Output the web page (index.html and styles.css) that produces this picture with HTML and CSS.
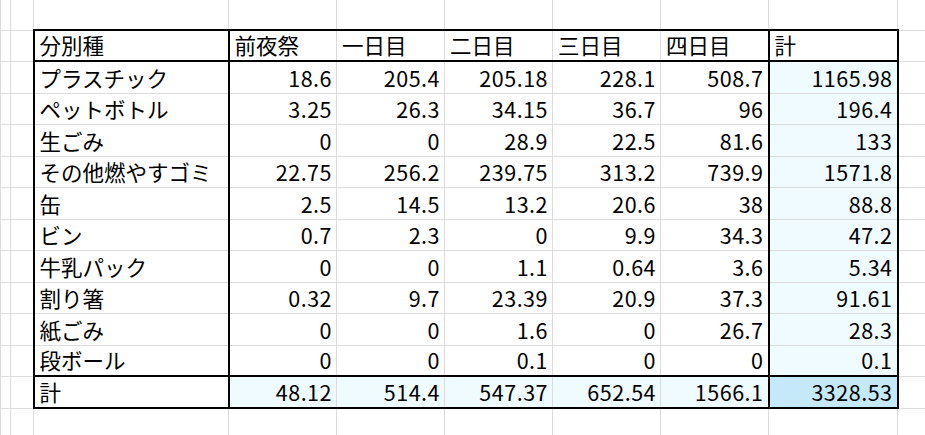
FILE: index.html
```html
<!DOCTYPE html>
<html lang="ja">
<head>
<meta charset="utf-8">
<link rel="stylesheet" href="styles.css">
</head>
<body>
<table class="sheet">
  <colgroup>
    <col class="c-a"><col class="c-b"><col class="c-lab"><col class="c-n"><col class="c-n"><col class="c-n"><col class="c-n"><col class="c-n"><col class="c-tot"><col class="c-z">
  </colgroup>
  <tr class="r-top"><td></td><td></td><td></td><td></td><td></td><td></td><td></td><td></td><td></td><td></td></tr>
  <tr class="r-odd head"><td></td><td></td><td class="lab tl">分別種</td><td class="txt tr">前夜祭</td><td class="txt">一日目</td><td class="txt">二日目</td><td class="txt">三日目</td><td class="txt">四日目</td><td class="txt tot">計</td><td></td></tr>
  <tr class="r-even"><td></td><td></td><td class="lab tl">プラスチック</td><td class="tr">18.6</td><td>205.4</td><td>205.18</td><td>228.1</td><td>508.7</td><td class="tot fill">1165.98</td><td></td></tr>
  <tr class="r-odd"><td></td><td></td><td class="lab tl">ペットボトル</td><td class="tr">3.25</td><td>26.3</td><td>34.15</td><td>36.7</td><td>96</td><td class="tot fill">196.4</td><td></td></tr>
  <tr class="r-even"><td></td><td></td><td class="lab tl">生ごみ</td><td class="tr">0</td><td>0</td><td>28.9</td><td>22.5</td><td>81.6</td><td class="tot fill">133</td><td></td></tr>
  <tr class="r-odd"><td></td><td></td><td class="lab tl">その他燃やすゴミ</td><td class="tr">22.75</td><td>256.2</td><td>239.75</td><td>313.2</td><td>739.9</td><td class="tot fill">1571.8</td><td></td></tr>
  <tr class="r-even"><td></td><td></td><td class="lab tl">缶</td><td class="tr">2.5</td><td>14.5</td><td>13.2</td><td>20.6</td><td>38</td><td class="tot fill">88.8</td><td></td></tr>
  <tr class="r-odd"><td></td><td></td><td class="lab tl">ビン</td><td class="tr">0.7</td><td>2.3</td><td>0</td><td>9.9</td><td>34.3</td><td class="tot fill">47.2</td><td></td></tr>
  <tr class="r-even"><td></td><td></td><td class="lab tl">牛乳パック</td><td class="tr">0</td><td>0</td><td>1.1</td><td>0.64</td><td>3.6</td><td class="tot fill">5.34</td><td></td></tr>
  <tr class="r-odd"><td></td><td></td><td class="lab tl">割り箸</td><td class="tr">0.32</td><td>9.7</td><td>23.39</td><td>20.9</td><td>37.3</td><td class="tot fill">91.61</td><td></td></tr>
  <tr class="r-even"><td></td><td></td><td class="lab tl">紙ごみ</td><td class="tr">0</td><td>0</td><td>1.6</td><td>0</td><td>26.7</td><td class="tot fill">28.3</td><td></td></tr>
  <tr class="r-odd"><td></td><td></td><td class="lab tl">段ボール</td><td class="tr">0</td><td>0</td><td>0.1</td><td>0</td><td>0</td><td class="tot fill">0.1</td><td></td></tr>
  <tr class="r-even sum"><td></td><td></td><td class="lab tl">計</td><td class="tr fill">48.12</td><td class="fill">514.4</td><td class="fill">547.37</td><td class="fill">652.54</td><td class="fill">1566.1</td><td class="tot grand">3328.53</td><td></td></tr>
  <tr class="r-bot"><td></td><td></td><td></td><td></td><td></td><td></td><td></td><td></td><td></td><td></td></tr>
</table>
</body>
</html>
```

FILE: styles.css
```css
html, body {
  margin: 0;
  padding: 0;
  background: #ffffff;
  overflow: hidden;
}

.sheet {
  border-collapse: collapse;
  table-layout: fixed;
  width: 935px;
  font-family: "Noto Sans CJK JP", "Noto Sans", sans-serif;
  font-size: 21.5px;
  color: #000000;
}

.c-a { width: 10px; }
.c-b { width: 23px; }
.c-lab { width: 195px; }
.c-n { width: 108px; }
.c-tot { width: 129px; }
.c-z { width: 38px; }

.sheet td {
  border: 1px solid #dcdcdc;
  padding: 0 4px 5px 4px;
  line-height: 21px;
  vertical-align: bottom;
  text-align: right;
  white-space: nowrap;
  overflow: hidden;
  letter-spacing: 0.5px;
}

.r-top { height: 30px; }
.r-top td { border-top: none; }
.r-odd { height: 31px; }
.r-even { height: 32px; }
.r-bot { height: 30px; }

.sheet td.lab,
.sheet td.txt {
  text-align: left;
  padding-left: 5px;
  letter-spacing: 0;
}

.sheet td.tl { border-left: 2px solid #000000; }
.sheet td.tr { border-left: 2px solid #000000; }
.sheet td.tot { border-left: 2px solid #000000; border-right: 2px solid #000000; }

.head td:nth-child(n+3):nth-child(-n+9) {
  border-top: 2px solid #000000;
  border-bottom: 2px solid #000000;
}

.sum td:nth-child(n+3):nth-child(-n+9) {
  border-top: 2px solid #000000;
  border-bottom: 2px solid #000000;
}

.fill { background: #f0fbff; }
.grand { background: #c6e9fa; }
```
